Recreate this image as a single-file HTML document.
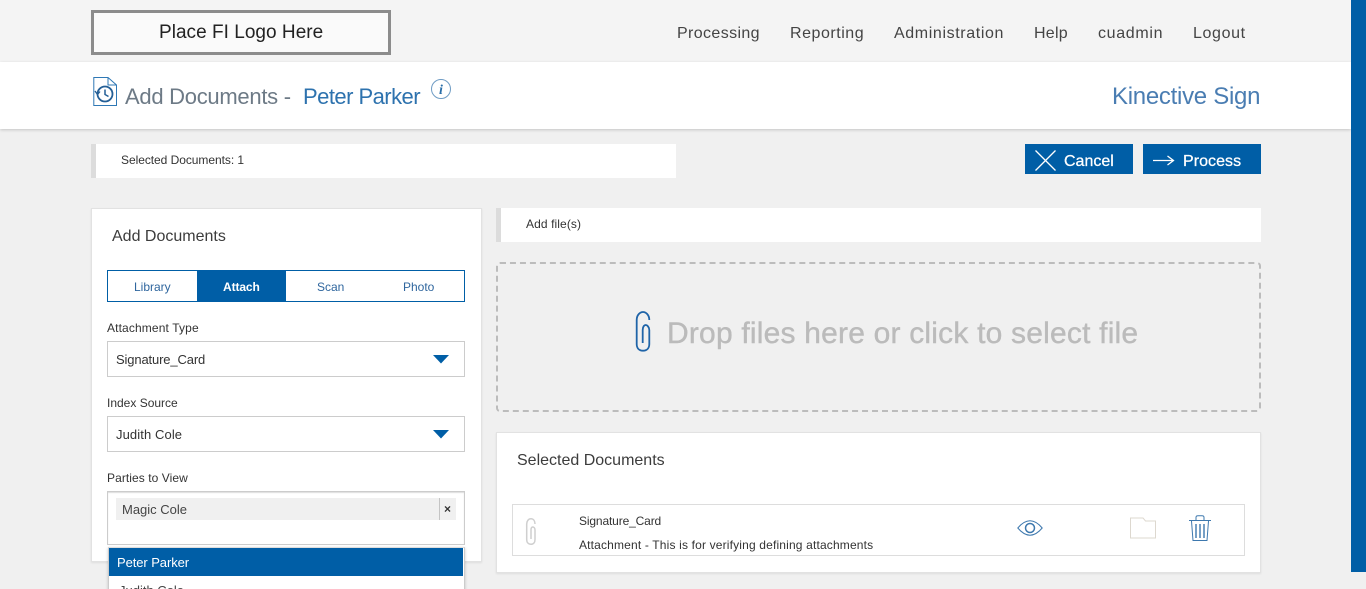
<!DOCTYPE html>
<html><head><meta charset="utf-8"><style>
html,body{margin:0;padding:0;width:1366px;height:589px;overflow:hidden;background:#f0f0f0}
body{position:relative;font-family:"Liberation Sans",sans-serif;color:#333}
.a{position:absolute}
.t{position:absolute;white-space:nowrap;line-height:1}
svg{position:absolute;overflow:visible}
.box{position:absolute;box-sizing:border-box;background:#fff}
.nav{font-size:16px;color:#444;top:26px}
.sel{left:107px;width:358px;height:36px;border:1px solid #ccc;background:#fff;box-sizing:border-box;position:absolute}
.lab{font-size:12px;color:#333;left:107px}
.tab{font-size:12px;color:#2f669e;top:281px}
</style></head><body>
<div class="a" style="left:0;top:0;width:1366px;height:62px;background:#f4f4f4"></div>
<div class="a" style="left:0;top:62px;width:1351px;height:67px;background:#fff;box-shadow:0 1px 3px rgba(0,0,0,.18)"></div>
<div class="a" style="left:1351px;top:0;width:15px;height:572px;background:#005ea6"></div>
<div class="a" style="left:91px;top:10px;width:294px;height:39px;border:3px solid #8c8c8c;background:#fafafa"></div>
<div class="t" style="left:159px;top:23px;font-size:19px;color:#222;letter-spacing:.03px">Place FI Logo Here</div>
<div class="t nav" style="left:677px;letter-spacing:.38px">Processing</div>
<div class="t nav" style="left:790px;letter-spacing:.53px">Reporting</div>
<div class="t nav" style="left:894px;letter-spacing:.62px">Administration</div>
<div class="t nav" style="left:1034px;letter-spacing:.25px">Help</div>
<div class="t nav" style="left:1098px;letter-spacing:.67px">cuadmin</div>
<div class="t nav" style="left:1193px;letter-spacing:.63px">Logout</div>
<svg style="left:93px;top:77px" width="26" height="30" viewBox="0 0 26 30" fill="none" stroke="#2f78b5" stroke-width="1"><path d="M.8 28.500V.5H15L23.500 8V28.500Z"/><path d="M15 .5V8H23.500"/><circle cx="12" cy="17" r="7.500" stroke="#245f96" stroke-width="1.800"/><path d="M12 12.500V17.500L15.500 19.500" stroke="#245f96" stroke-width="1.500"/><path d="M2 14L4.500 17.500L7 14.500" stroke="#245f96" stroke-width="1.300"/></svg>
<div class="t" style="left:125px;top:86px;font-size:22px;color:#6d7a86;letter-spacing:-.28px">Add Documents -</div>
<div class="t" style="left:303px;top:86px;font-size:22px;color:#2d72ae;letter-spacing:-.54px">Peter Parker</div>
<svg style="left:431px;top:79px" width="20" height="20" viewBox="0 0 20 20"><circle cx="10" cy="10" r="9.500" fill="none" stroke="#6f9cc4"/><text x="10" y="15" text-anchor="middle" font-family="Liberation Serif" font-style="italic" font-weight="700" font-size="14" fill="#2a6ea8">i</text></svg>
<div class="t" style="left:1112px;top:85px;font-size:24px;color:#4a7db2;letter-spacing:-.28px">Kinective Sign</div>

<div class="a" style="left:91px;top:144px;width:585px;height:34px;background:#fff"></div>
<div class="a" style="left:91px;top:144px;width:5px;height:34px;background:#dcdcdc"></div>
<div class="t" style="left:121px;top:154px;font-size:12px;color:#333;letter-spacing:-.05px">Selected Documents: 1</div>

<div class="a" style="left:1025px;top:144px;width:108px;height:30px;background:#005ea6"></div>
<svg style="left:1034px;top:149px" width="22" height="22"><path d="M1.500 1.500L21.500 21.500M21.500 1.500L1.500 21.500" stroke="#fff" stroke-width="1.300" fill="none"/></svg>
<div class="t" style="left:1064px;top:154px;font-size:16px;color:#fff;-webkit-text-stroke:.25px #fff">Cancel</div>
<div class="a" style="left:1143px;top:144px;width:118px;height:30px;background:#005ea6"></div>
<svg style="left:1153px;top:154px" width="22" height="12"><path d="M0 6.500H20M14.500 2L20.500 6.500L14.500 11" stroke="#fff" stroke-width="1.300" fill="none"/></svg>
<div class="t" style="left:1183px;top:154px;font-size:16px;color:#fff;letter-spacing:.05px;-webkit-text-stroke:.25px #fff">Process</div>

<div class="box" style="left:91px;top:208px;width:391px;height:354px;border:1px solid #e2e2e2;box-shadow:0 1px 2px rgba(0,0,0,.08)"></div>
<div class="t" style="left:112px;top:229px;font-size:16px;color:#3c3c3c">Add Documents</div>
<div class="a" style="left:107px;top:270px;width:358px;height:32px;box-sizing:border-box;border:1px solid #005ea6;background:#fff"></div>
<div class="a" style="left:197px;top:270px;width:89px;height:32px;background:#005ea6"></div>
<div class="t tab" style="left:134px">Library</div>
<div class="t tab" style="left:223px;color:#fff;font-weight:700;letter-spacing:-.1px">Attach</div>
<div class="t tab" style="left:317px">Scan</div>
<div class="t tab" style="left:403px">Photo</div>

<div class="t lab" style="top:322px;letter-spacing:.13px">Attachment Type</div>
<div class="sel" style="top:341px"></div>
<div class="t" style="left:116px;top:353px;font-size:13px;color:#333;letter-spacing:-.14px">Signature_Card</div>
<svg style="left:433px;top:355px" width="16" height="9"><path d="M0 0H16L8 8.500Z" fill="#005ea6"/></svg>

<div class="t lab" style="top:397px">Index Source</div>
<div class="sel" style="top:416px"></div>
<div class="t" style="left:116px;top:428px;font-size:13px;color:#333;letter-spacing:.1px">Judith Cole</div>
<svg style="left:433px;top:430px" width="16" height="9"><path d="M0 0H16L8 8.500Z" fill="#005ea6"/></svg>

<div class="t lab" style="top:472px;letter-spacing:.07px">Parties to View</div>
<div class="a" style="left:107px;top:491px;width:358px;height:54px;box-sizing:border-box;border:1px solid #ccc;box-shadow:inset 0 1px 1px #ddd;background:#fff"></div>
<div class="a" style="left:116px;top:498px;width:340px;height:22px;background:#f0f0f0"></div>
<div class="a" style="left:439px;top:498px;width:1px;height:22px;background:#c4c4c4"></div>
<div class="t" style="left:122px;top:503px;font-size:13px;color:#444">Magic Cole</div>
<div class="t" style="left:444px;top:503px;font-size:12px;font-weight:700;color:#333">×</div>

<div class="a" style="left:108px;top:547px;width:357px;height:60px;background:#fff;box-sizing:border-box;border:1px solid #ccc;border-top:1px solid #ddd;box-shadow:0 1px 3px rgba(0,0,0,.2)"></div>
<div class="a" style="left:109px;top:548px;width:354px;height:28px;background:#005ea6"></div>
<div class="t" style="left:117px;top:556px;font-size:13px;color:#fff;letter-spacing:-.08px">Peter Parker</div>
<div class="t" style="left:119px;top:584px;font-size:13px;color:#444">Judith Cole</div>

<div class="a" style="left:496px;top:208px;width:765px;height:34px;background:#fff"></div>
<div class="a" style="left:496px;top:208px;width:5px;height:34px;background:#dcdcdc"></div>
<div class="t" style="left:526px;top:218px;font-size:12px;color:#333;letter-spacing:.1px">Add file(s)</div>

<div class="a" style="left:496px;top:262px;width:765px;height:150px;box-sizing:border-box;border:2px dashed #bcbcbc;border-radius:4px"></div>
<svg style="left:630px;top:305px" width="30" height="50" viewBox="630 305 30 50" fill="none" stroke="#1f64a8" stroke-width="1.800"><path d="M649.300 320C649.300 315 646 312 643 312C640 312 636.700 315 636.700 320V344C636.700 348 639 350.700 643 350.700C647 350.700 649.300 348 649.300 344V330C649.300 327 647 325 645.800 325C644 325 642.700 327 642.700 330V343"/></svg>
<div class="t" style="left:667px;top:319px;font-size:30px;color:#bbb;letter-spacing:.2px;-webkit-text-stroke:.4px #bbb">Drop files here or click to select file</div>

<div class="box" style="left:496px;top:432px;width:765px;height:141px;border:1px solid #e2e2e2;box-shadow:0 1px 2px rgba(0,0,0,.08)"></div>
<div class="t" style="left:517px;top:453px;font-size:16px;color:#3c3c3c">Selected Documents</div>
<div class="box" style="left:512px;top:504px;width:733px;height:52px;border:1px solid #ddd"></div>
<svg style="left:520px;top:512px" width="20" height="38" viewBox="520 512 20 38" fill="none" stroke="#cfcfcf" stroke-width="1.500"><path d="M535 524C535 521 533.500 518.800 531 518.800C528.500 518.800 526.700 521 526.700 524V539.500C526.700 542.500 528.500 544.300 531 544.300C533.500 544.300 535 542.500 535 539.500V530C535 528 533.800 527 532.800 527C531.800 527 531 528 531 530V539"/></svg>
<div class="t" style="left:579px;top:515px;font-size:12px;color:#333;letter-spacing:-.14px">Signature_Card</div>
<div class="t" style="left:579px;top:539px;font-size:12px;color:#333;letter-spacing:.165px">Attachment - This is for verifying defining attachments</div>
<svg style="left:1017px;top:520px" width="26" height="16" viewBox="0 0 26 16" fill="none" stroke="#3d78ae"><path d="M.8 8C5 3 9 .8 13 .8S21 3 25.200 8C21 13 17 15.200 13 15.200S5 13 .8 8Z"/><circle cx="13" cy="8" r="4.500" stroke-width="1.500"/></svg>
<svg style="left:1130px;top:517px" width="27" height="22" viewBox="0 0 27 22" fill="none" stroke="#ddd8cf"><path d="M.5 21V1H13L15.500 4H25.500V21Z"/></svg>
<svg style="left:1188px;top:515px" width="24" height="27" viewBox="0 0 24 27" fill="none" stroke="#3d78ae"><path d="M1 5.500H23M8 5V2.500C8 1 9 .8 10 .8H14C15 .8 16 1 16 2.500V5"/><path d="M3.500 6L5 25.500H19L20.500 6"/><path d="M8 9V23M12 9V23M16 9V23" stroke-width="1.400"/></svg>
</body></html>
